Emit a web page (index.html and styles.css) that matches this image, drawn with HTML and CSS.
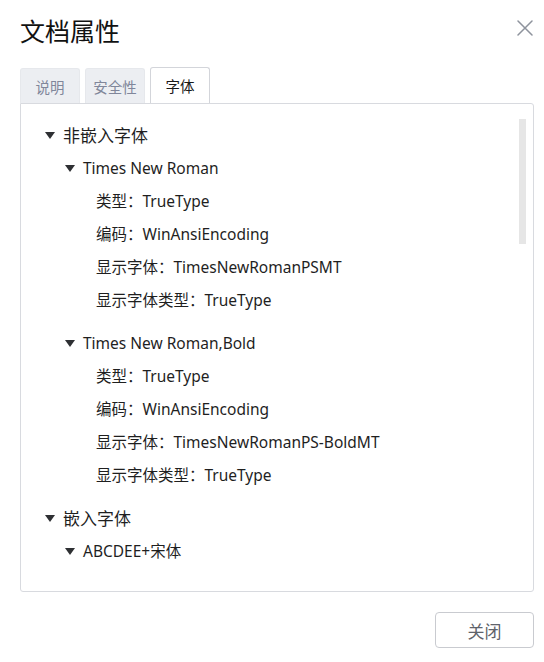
FILE: index.html
```html
<!DOCTYPE html>
<html lang="zh-CN">
<head>
<meta charset="utf-8">
<title>文档属性</title>
<link rel="stylesheet" href="styles.css">
</head>
<body>
<div class="dialog">
  <div class="header">
    <h1 class="title">文档属性</h1>
    <svg class="close" width="16" height="16" viewBox="0 0 16 16" aria-label="关闭">
      <path d="M1 1 L15 15 M15 1 L1 15" stroke="#8e939d" stroke-width="1.5" fill="none" stroke-linecap="round"/>
    </svg>
  </div>
  <div class="tabs">
    <div class="tab">说明</div>
    <div class="tab">安全性</div>
    <div class="tab active">字体</div>
  </div>
  <div class="panel">
    <div class="tree">
      <div class="row l1"><span class="caret"></span><span>非嵌入字体</span></div>
      <div class="row l2"><span class="caret"></span><span>Times New Roman</span></div>
      <div class="leaves">
        <div class="row l3">类型：TrueType</div>
        <div class="row l3">编码：WinAnsiEncoding</div>
        <div class="row l3">显示字体：TimesNewRomanPSMT</div>
        <div class="row l3">显示字体类型：TrueType</div>
      </div>
      <div class="row l2"><span class="caret"></span><span>Times New Roman,Bold</span></div>
      <div class="leaves">
        <div class="row l3">类型：TrueType</div>
        <div class="row l3">编码：WinAnsiEncoding</div>
        <div class="row l3">显示字体：TimesNewRomanPS-BoldMT</div>
        <div class="row l3">显示字体类型：TrueType</div>
      </div>
      <div class="row l1"><span class="caret"></span><span>嵌入字体</span></div>
      <div class="row l2"><span class="caret"></span><span>ABCDEE+宋体</span></div>
    </div>
    <div class="scrollbar"></div>
  </div>
  <div class="footer">
    <button class="btn">关闭</button>
  </div>
</div>
</body>
</html>
```

FILE: styles.css
```css
html, body {
  margin: 0;
  padding: 0;
  background: #ffffff;
}
body {
  width: 544px;
  height: 662px;
  overflow: hidden;
  font-family: "Noto Sans", "Noto Sans CJK SC", sans-serif;
  color: #1f1f1f;
}
.dialog {
  padding: 0 10px 0 20px;
}
.header {
  height: 59px;
  display: flex;
  align-items: center;
  justify-content: space-between;
}
.title {
  margin: 0;
  font-family: "Noto Sans CJK SC", sans-serif;
  font-size: 25px;
  font-weight: 400;
  line-height: 30px;
  color: #111;
}
.close {
  margin-right: 1px;
  margin-top: -3px;
}
.tabs {
  margin-top: 9px;
  display: flex;
  gap: 5px;
  height: 35px;
}
.tab {
  box-sizing: border-box;
  width: 60px;
  height: 35px;
  display: flex;
  align-items: center;
  justify-content: center;
  font-family: "Noto Sans CJK SC", sans-serif;
  font-size: 14.5px;
  color: #80869a;
  background: #eceef2;
  border: 1px solid #e6e8ec;
  border-bottom: none;
  border-radius: 3px 3px 0 0;
}
.tab.active {
  height: 36px;
  margin-top: -1px;
  background: #fff;
  color: #1a1a1a;
  border-color: #d3d5da;
  position: relative;
  z-index: 1;
}
.panel {
  position: relative;
  box-sizing: border-box;
  height: 489px;
  border: 1px solid #d8dadf;
  border-radius: 0 3px 3px 3px;
  overflow: hidden;
}
.tree {
  padding-top: 15px;
}
.row {
  height: 33px;
  line-height: 33px;
  display: flex;
  align-items: center;
  white-space: nowrap;
}
.l1 {
  padding-left: 24px;
  font-size: 17px;
}
.l2 {
  padding-left: 44px;
  font-size: 15.5px;
}
.l3 {
  padding-left: 75px;
  font-size: 15.5px;
}
.caret {
  width: 0;
  height: 0;
  border-left: 5px solid transparent;
  border-right: 5px solid transparent;
  border-top: 7px solid #2e3033;
  margin-right: 8px;
  margin-top: -1px;
}
.leaves {
  margin-bottom: 10px;
}
.scrollbar {
  position: absolute;
  top: 15px;
  right: 7px;
  width: 7px;
  height: 125px;
  background: #e6e6e6;
}
.footer {
  display: flex;
  justify-content: flex-end;
  margin-top: 20px;
}
.btn {
  box-sizing: border-box;
  width: 99px;
  height: 36px;
  background: #fff;
  border: 1px solid #c9cbd0;
  border-radius: 4px;
  font-family: "Noto Sans CJK SC", sans-serif;
  font-size: 17px;
  color: #5f636b;
  padding: 0;
}
```
